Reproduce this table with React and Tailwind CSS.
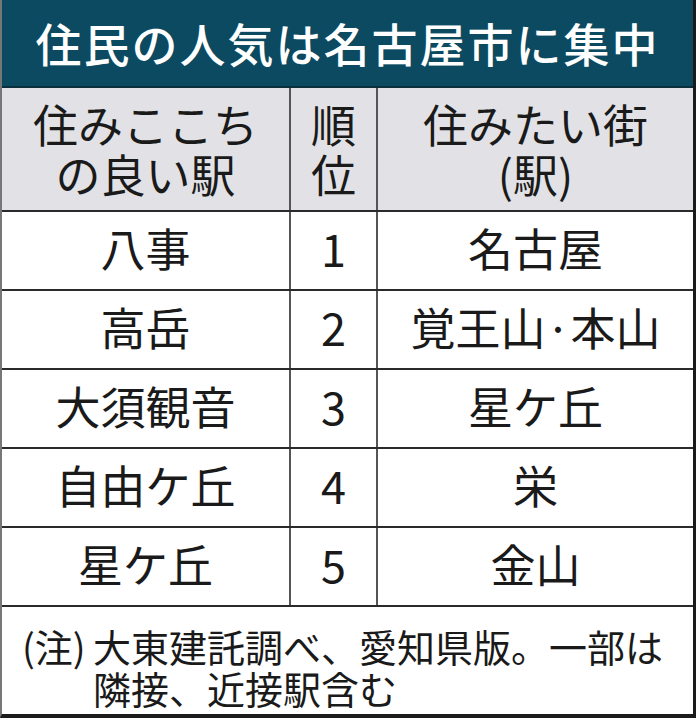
import React from "react";

const rows = [
  ["八事", "1", "名古屋"],
  ["高岳", "2", "覚王山·本山"],
  ["大須観音", "3", "星ケ丘"],
  ["自由ケ丘", "4", "栄"],
  ["星ケ丘", "5", "金山"],
];

const jp = { fontFamily: '"Noto Sans CJK JP", "Noto Sans", sans-serif' };

export default function App() {
  return (
    <div
      className="w-[696px] h-[718px] bg-white border-l-2 border-l-[#777] border-r-[3px] border-r-[#1b1b1b] border-b-4 border-b-[#1b1b1b] flex flex-col text-[#1a1a1a]"
      style={jp}
    >
      {/* タイトル */}
      <div className="h-[88px] shrink-0 bg-[#0b4a61] flex items-center justify-center border-b-2 border-b-[#0a2f3d]">
        <h1 className="text-white text-[46px] font-medium tracking-[2px] leading-none m-0 pb-[2px]">
          住民の人気は名古屋市に集中
        </h1>
      </div>

      {/* 見出し */}
      <div className="h-[124px] shrink-0 bg-[#e2e2e6] flex border-b-2 border-b-[#2a2a2a] text-[45px] leading-[50px]">
        <div className="w-[289px] border-r-2 border-r-[#555] flex flex-col items-center justify-center">
          <span>住みここち</span>
          <span>の良い駅</span>
        </div>
        <div className="w-[87px] border-r-2 border-r-[#555] flex flex-col items-center justify-center">
          <span>順</span>
          <span>位</span>
        </div>
        <div className="flex-1 flex flex-col items-center justify-center">
          <span>住みたい街</span>
          <span>(駅)</span>
        </div>
      </div>

      {rows.map(([a, n, b]) => (
        <div
          key={n}
          className="h-[79px] shrink-0 flex border-b-2 border-b-[#2a2a2a] text-[45px] leading-none"
        >
          <div className="w-[289px] border-r-2 border-r-[#555] flex items-center justify-center pb-[6px]">
            {a}
          </div>
          <div className="w-[87px] border-r-2 border-r-[#555] flex items-center justify-center pb-[6px]">
            {n}
          </div>
          <div className="flex-1 flex items-center justify-center pb-[6px]">
            {b}
          </div>
        </div>
      ))}

      {/* 注記 */}
      <div className="flex-1 flex pt-[18px] pl-[20px] text-[38px] leading-[42px]">
        <span className="w-[71px] shrink-0">(注)</span>
        <span className="flex flex-col">
          <span>大東建託調べ、愛知県版。一部は</span>
          <span>隣接、近接駅含む</span>
        </span>
      </div>
    </div>
  );
}
